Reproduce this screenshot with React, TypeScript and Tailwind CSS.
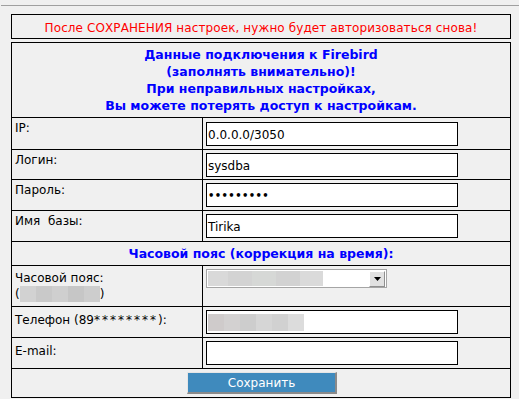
import React from "react";

function Blocks({ colors, h }: { colors: string[]; h: string }) {
  return (
    <div className={`flex ${h}`}>
      {colors.map((c, i) => (
        <div key={i} className="w-[16px] h-full" style={{ backgroundColor: c }} />
      ))}
    </div>
  );
}

function TextInput({ value, password }: { value: string; password?: boolean }) {
  return (
    <div className="w-[252px] h-[24px] bg-white border border-black flex items-center pl-[1px] pt-[2px] text-[12px] leading-[16px] text-black">
      {password ? <span className="font-bold text-[10px] tracking-[0.4px]">{value}</span> : value}
    </div>
  );
}

export default function App() {
  return (
    <div className="w-[519px] h-[399px] bg-[#f0f0f0] font-['DejaVu_Sans',sans-serif] text-[12px] leading-[16px] text-black overflow-hidden">
      <div className="pt-[5px] pl-[1px]">
        <div className="h-px bg-[#a0a0a0]" />
      </div>
      <div className="mt-[8px] ml-[11px] w-[500px] h-[25px] border border-black flex items-center justify-center pt-[2px] text-[#ff0000] tracking-[0.1px]">
        После СОХРАНЕНИЯ настроек, нужно будет авторизоваться снова!
      </div>
      <div className="mt-[3px] ml-[11px] w-[500px] border border-black flex flex-col">
        <div className="h-[75px] border-b border-black flex flex-col items-center justify-center text-center font-bold text-[#0000ff] text-[12.5px] leading-[17px]">
          <div>Данные подключения к Firebird</div>
          <div>(заполнять внимательно)!</div>
          <div>При неправильных настройках,</div>
          <div>Вы можете потерять доступ к настройкам.</div>
        </div>

        <div className="h-[32px] border-b border-black flex">
          <div className="w-[191px] border-r border-black pl-[3px] pt-[2px]">IP:</div>
          <div className="flex-1 pl-[3px] flex items-center">
            <TextInput value="0.0.0.0/3050" />
          </div>
        </div>
        <div className="h-[30px] border-b border-black flex">
          <div className="w-[191px] border-r border-black pl-[3px] pt-[2px]">Логин:</div>
          <div className="flex-1 pl-[3px] flex items-center">
            <TextInput value="sysdba" />
          </div>
        </div>
        <div className="h-[31px] border-b border-black flex">
          <div className="w-[191px] border-r border-black pl-[3px] pt-[2px]">Пароль:</div>
          <div className="flex-1 pl-[3px] flex items-center">
            <TextInput value="•••••••••" password />
          </div>
        </div>
        <div className="h-[31px] border-b border-black flex">
          <div className="w-[191px] border-r border-black pl-[3px] pt-[2px] whitespace-pre">Имя  базы:</div>
          <div className="flex-1 pl-[3px] flex items-center">
            <TextInput value="Tirika" />
          </div>
        </div>

        <div className="h-[24px] border-b border-black flex items-center justify-center font-bold text-[#0000ff] text-[12.5px] pt-[1px]">
          Часовой пояс (коррекция на время):
        </div>

        <div className="h-[41px] border-b border-black flex">
          <div className="w-[191px] border-r border-black pl-[3px] pt-[4px]">
            <div>Часовой пояс:</div>
            <div className="flex items-center">
              <span>(</span>
              <Blocks
                h="h-[16px]"
                colors={["#d2d2d2", "#c9c9c9", "#cfcfcf", "#c6c6c6", "#cdcdcd"]}
              />
              <span>)</span>
            </div>
          </div>
          <div className="flex-1 pl-[3px] pt-[3px]">
            <div className="w-[181px] h-[19px] border border-[#a5a5a5] bg-white flex items-center">
              <div className="flex-1 h-full flex items-stretch py-[1px] pl-[1px]">
                <div className="flex h-full">
                  <div className="w-[20px] bg-[#d9d9d9]" />
                  <div className="w-[24px] bg-[#d3d3d3]" />
                  <div className="w-[24px] bg-[#d6d8d6]" />
                  <div className="w-[24px] bg-[#d2d2d2]" />
                  <div className="w-[23px] bg-[#dadada]" />
                </div>
              </div>
              <div className="w-[16px] h-[16px] mr-[1px] bg-[#e1e1e1] border-r border-b border-[#8f8f8f] border-t border-l border-t-white border-l-white flex items-center justify-center">
                <svg width="7" height="4" viewBox="0 0 7 4">
                  <path d="M0 0 H7 L3.5 4 Z" fill="#000" />
                </svg>
              </div>
            </div>
          </div>
        </div>

        <div className="h-[31px] border-b border-black flex">
          <div className="w-[191px] border-r border-black pl-[3px] pt-[5px]">
            Телефон (89<span className="tracking-[2px]">********</span>):
          </div>
          <div className="flex-1 pl-[3px] flex items-center">
            <div className="w-[252px] h-[24px] bg-white border border-black flex items-center pl-[1px]">
              <Blocks
                h="h-[17px]"
                colors={["#cfcbcb", "#d3d1d1", "#cdcdcd", "#d6d6d6", "#d1d1d1", "#dcdcdc"]}
              />
            </div>
          </div>
        </div>
        <div className="h-[31px] border-b border-black flex">
          <div className="w-[191px] border-r border-black pl-[3px] pt-[5px]">E-mail:</div>
          <div className="flex-1 pl-[3px] flex items-center">
            <TextInput value="" />
          </div>
        </div>

        <div className="h-[28px] flex justify-center pt-[3px] pl-[2px]">
          <button className="w-[150px] h-[22px] bg-[#3f8abd] border-t border-l border-t-[#e6e6e6] border-l-[#e6e6e6] border-r-2 border-b-2 border-r-[#8a8a8a] border-b-[#8a8a8a] text-white text-[12px] leading-[16px] flex items-center justify-center pt-[1px] font-['DejaVu_Sans',sans-serif]">
            Сохранить
          </button>
        </div>
      </div>
    </div>
  );
}
